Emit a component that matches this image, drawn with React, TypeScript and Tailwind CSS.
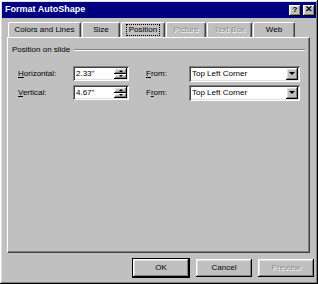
import React from 'react'

const raised =
  'shadow-[inset_-1px_-1px_#000,inset_1px_1px_#fff,inset_-2px_-2px_#808080,inset_2px_2px_#dfdfdf]'
const sunken =
  'shadow-[inset_1px_1px_#808080,inset_-1px_-1px_#fff,inset_2px_2px_#404040,inset_-2px_-2px_#dfdfdf]'

interface ITab {
  text: string
  width: number
  selected?: boolean
  disabled?: boolean
}

const tabs: ITab[] = [
  { text: 'Colors and Lines', width: 73 },
  { text: 'Size', width: 38 },
  { text: 'Position', width: 44, selected: true },
  { text: 'Picture', width: 40, disabled: true },
  { text: 'Text Box', width: 45, disabled: true },
  { text: 'Web', width: 42 },
]

const Tabs = () => {
  return (
    <div className="flex ml-[6px] mt-[4px] h-[15px] items-end">
      {tabs.map((tab) => (
        <div
          key={tab.text}
          style={{ width: tab.width }}
          className="h-[15px] mr-[1px] flex items-center justify-center border-t border-l border-white border-r border-r-[#404040] rounded-t-[2px] shadow-[inset_-1px_0_#808080]"
        >
          <span
            className={
              tab.selected
                ? 'px-[2px] leading-[10px] border border-dotted border-black'
                : tab.disabled
                ? 'text-[#8a8a8a] [text-shadow:1px_1px_#fff]'
                : ''
            }
          >
            {tab.text}
          </span>
        </div>
      ))}
    </div>
  )
}

const Spinner = () => (
  <div className="flex flex-col w-[13px] h-[11px] mr-[2px]">
    <div className={`flex-1 bg-[#c0c0c0] flex items-center justify-center ${raised}`}>
      <div className="w-0 h-0 border-l-[2px] border-r-[2px] border-b-[2px] border-l-transparent border-r-transparent border-b-black" />
    </div>
    <div className={`flex-1 bg-[#c0c0c0] flex items-center justify-center ${raised}`}>
      <div className="w-0 h-0 border-l-[2px] border-r-[2px] border-t-[2px] border-l-transparent border-r-transparent border-t-black" />
    </div>
  </div>
)

const Row = ({
  label,
  ul,
  value,
  fromUl,
}: {
  label: string
  ul: number
  value: string
  fromUl: number
}) => {
  const from = 'From:'
  return (
    <div className="flex items-center h-[15px]">
      <span className="w-[55px]">
        {label.slice(0, ul)}
        <span className="underline">{label[ul]}</span>
        {label.slice(ul + 1)}
      </span>
      <div className={`w-[56px] h-[15px] bg-white flex items-center justify-between pl-[3px] ${sunken}`}>
        <span>{value}</span>
        <Spinner />
      </div>
      <span className="ml-[17px] w-[43px]">
        {from.slice(0, fromUl)}
        <span className="underline">{from[fromUl]}</span>
        {from.slice(fromUl + 1)}
      </span>
      <div className={`w-[111px] h-[16px] bg-white flex items-center justify-between pl-[3px] ${sunken}`}>
        <span>Top Left Corner</span>
        <div className={`w-[12px] h-[12px] mr-[2px] bg-[#c0c0c0] flex items-center justify-center ${raised}`}>
          <div className="w-0 h-0 border-l-[3px] border-r-[3px] border-t-[3px] border-l-transparent border-r-transparent border-t-black" />
        </div>
      </div>
    </div>
  )
}

const Button = ({ text, disabled }: { text: string; disabled?: boolean }) => (
  <div
    className={`w-[56px] h-[18px] flex items-center justify-center bg-[#c0c0c0] ${raised} ${
      disabled ? 'text-[#8a8a8a] [text-shadow:1px_1px_#fff]' : ''
    }`}
  >
    {text}
  </div>
)

export default function App() {
  return (
    <div
      className={`w-[318px] h-[284px] bg-[#c0c0c0] p-[2px] flex flex-col text-[8px] text-black ${raised}`}
      style={{ fontFamily: '"Liberation Sans", Arial, sans-serif' }}
    >
      {/* title bar */}
      <div className="h-[16px] bg-[#000080] flex items-center justify-between pl-[3px] pr-[1px]">
        <span className="text-white font-bold text-[9px]">Format AutoShape</span>
        <div className="flex gap-[2px]">
          <div className={`w-[12px] h-[11px] bg-[#c0c0c0] flex items-center justify-center font-bold text-[8px] ${raised}`}>
            ?
          </div>
          <div className={`w-[12px] h-[11px] bg-[#c0c0c0] flex items-center justify-center font-bold text-[9px] ${raised}`}>
            ✕
          </div>
        </div>
      </div>

      <Tabs />

      {/* tab panel */}
      <div className="ml-[5px] w-[303px] h-[216px] border-t border-l border-white border-r border-b border-r-[#404040] border-b-[#404040] shadow-[inset_-1px_-1px_#808080]">
        <div className="flex items-center mt-[6px] ml-[4px] mr-[4px] h-[12px]">
          <span>Position on slide</span>
          <div className="flex-1 ml-[4px] h-[2px] border-t border-t-[#808080] border-b border-b-white" />
        </div>
        <div className="flex flex-col gap-[4px] mt-[10px] ml-[10px]">
          <Row label="Horizontal:" ul={0} value={'2.33"'} fromUl={0} />
          <Row label="Vertical:" ul={0} value={'4.67"'} fromUl={1} />
        </div>
      </div>

      {/* buttons */}
      <div className="flex justify-end gap-[6px] mt-[5px] mr-[2px]">
        <div className="border border-black">
          <Button text="OK" />
        </div>
        <div className="mt-[1px]">
          <Button text="Cancel" />
        </div>
        <div className="mt-[1px]">
          <Button text="Preview" disabled />
        </div>
      </div>
    </div>
  )
}
